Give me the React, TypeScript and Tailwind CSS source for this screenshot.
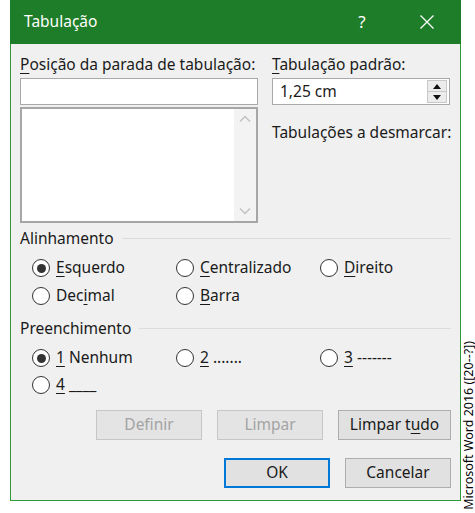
import React from "react";

const font = { fontFamily: '"Noto Sans", "Open Sans", sans-serif' };

// mnemonic letter, underlined like a Windows accelerator key
const U = ({ children }: { children: React.ReactNode }) => (
  <span className="underline underline-offset-[3px] decoration-1">{children}</span>
);

const Radio = ({ checked, children }: { checked?: boolean; children: React.ReactNode }) => (
  <label className="flex items-center h-[24px] gap-[6px] text-[15.5px] text-[#1a1a1a]">
    <span className="w-[18px] h-[18px] rounded-full border-[1.5px] border-[#333] bg-white flex items-center justify-center shrink-0">
      {checked && <span className="w-[9px] h-[9px] rounded-full bg-[#333]" />}
    </span>
    <span>{children}</span>
  </label>
);

const Group = ({ title }: { title: string }) => (
  <div className="flex items-center h-[20px] text-[15.5px] text-[#1a1a1a]">
    <span>{title}</span>
    <span className="flex-1 ml-[8px] h-px bg-[#dcdcdc] -mt-[2px]" />
  </div>
);

const Btn = ({
  children,
  disabled,
  primary,
  w = "w-[106px]",
}: {
  children: React.ReactNode;
  disabled?: boolean;
  primary?: boolean;
  w?: string;
}) => (
  <button
    className={
      "h-[30px] text-[15.5px] flex items-center justify-center " +
      w +
      " " +
      (disabled
        ? "bg-[#e4e4e4] border border-[#c6c6c6] text-[#a3a3a3]"
        : primary
        ? "bg-[#e1e1e1] border-2 border-[#0078d7] text-[#1a1a1a]"
        : "bg-[#e1e1e1] border border-[#adadad] text-[#1a1a1a]")
    }
  >
    {children}
  </button>
);

export default function App() {
  return (
    <div className="flex w-[475px] h-[513px] bg-white" style={font}>
      <div className="ml-[10px] w-[451px] h-[501px] flex flex-col border border-[#2f9a37] border-t-0 bg-[#f0f0f0] shrink-0">
        {/* title bar */}
        <div className="h-[44px] -mx-px bg-[#1e7d28] flex items-center text-white shrink-0">
          <span className="pl-[14px] text-[15.5px] flex-1">Tabulação</span>
          <span className="w-[46px] text-center text-[17px]">?</span>
          <span className="w-[46px] ml-[19px] mr-[11px] flex justify-center">
            <svg width="16" height="16" viewBox="0 0 16 16" stroke="white" strokeWidth="1.3" fill="none">
              <path d="M1.5 1.5 L14.5 14.5 M14.5 1.5 L1.5 14.5" />
            </svg>
          </span>
        </div>

        <div className="flex-1 pl-[9px] pr-[9px] pt-[10px]">
          <div className="flex gap-[14px]">
            <div className="w-[238px] shrink-0">
              <div className="h-[20px] leading-[20px] text-[15.5px] text-[#1a1a1a] whitespace-nowrap">
                <U>P</U>osição da parada de tabulação:
              </div>
              <div className="mt-[4px] h-[27px] bg-white border border-[#a9a9a9]" />
              <div className="mt-[2px] h-[116px] bg-white border-2 border-[#a6a6a6] flex justify-end">
                <div className="w-[22px] bg-[#f3f3f3] flex flex-col items-center justify-between py-[6px]">
                  <svg width="12" height="8" viewBox="0 0 12 8" fill="none" stroke="#c2c2c2" strokeWidth="1.5">
                    <path d="M1 6.5 L6 1.5 L11 6.5" />
                  </svg>
                  <svg width="12" height="8" viewBox="0 0 12 8" fill="none" stroke="#c2c2c2" strokeWidth="1.5">
                    <path d="M1 1.5 L6 6.5 L11 1.5" />
                  </svg>
                </div>
              </div>
            </div>
            <div className="flex-1">
              <div className="h-[20px] leading-[20px] text-[15.5px] text-[#1a1a1a] whitespace-nowrap">
                <U>T</U>abulação padrão:
              </div>
              <div className="mt-[4px] h-[27px] w-[178px] bg-white border border-[#a9a9a9] flex items-center">
                <span className="flex-1 pl-[7px] text-[15.5px] text-[#1a1a1a]">1,25 cm</span>
                <div className="w-[20px] h-[23px] mr-[2px] flex flex-col border border-[#c8c8c8]">
                  <div className="flex-1 bg-[#ececec] flex items-center justify-center border-b border-[#c8c8c8]">
                    <svg width="8" height="5" viewBox="0 0 8 5"><path d="M0 5 L4 0 L8 5Z" fill="#111" /></svg>
                  </div>
                  <div className="flex-1 bg-[#ececec] flex items-center justify-center">
                    <svg width="8" height="5" viewBox="0 0 8 5"><path d="M0 0 L4 5 L8 0Z" fill="#111" /></svg>
                  </div>
                </div>
              </div>
              <div className="mt-[17px] h-[20px] leading-[20px] text-[15.5px] text-[#1a1a1a] whitespace-nowrap">
                Tabulações a desmarcar:
              </div>
            </div>
          </div>

          <div className="mt-[6px]">
            <Group title="Alinhamento" />
          </div>
          <div className="mt-[7px] ml-[12px] grid grid-cols-[144px_144px_1fr] gap-y-[4px]">
            <Radio checked>
              <U>E</U>squerdo
            </Radio>
            <Radio>
              <U>C</U>entralizado
            </Radio>
            <Radio>
              <U>D</U>ireito
            </Radio>
            <Radio>
              Dec<U>i</U>mal
            </Radio>
            <Radio>
              <U>B</U>arra
            </Radio>
          </div>

          <div className="mt-[11px]">
            <Group title="Preenchimento" />
          </div>
          <div className="mt-[7px] ml-[12px] grid grid-cols-[144px_144px_1fr] gap-y-[3px]">
            <Radio checked>
              <U>1</U> Nenhum
            </Radio>
            <Radio>
              <U>2</U> .......
            </Radio>
            <Radio>
              <U>3</U> -------
            </Radio>
            <Radio>
              <U>4</U> ____
            </Radio>
          </div>

          <div className="mt-[13px] flex justify-end gap-[15px]">
            <Btn disabled>Definir</Btn>
            <Btn disabled>Limpar</Btn>
            <Btn w="w-[113px]">
              Limpar t<U>u</U>do
            </Btn>
          </div>
          <div className="mt-[18px] flex justify-end gap-[15px]">
            <Btn primary>OK</Btn>
            <Btn>Cancelar</Btn>
          </div>
        </div>
      </div>

      <div className="w-[14px] shrink-0 flex justify-center items-end pb-[3px]">
        <span className="[writing-mode:vertical-rl] rotate-180 text-[12.5px] leading-[13px] text-black whitespace-nowrap">
          Microsoft Word 2016 ([20--?])
        </span>
      </div>
    </div>
  );
}
